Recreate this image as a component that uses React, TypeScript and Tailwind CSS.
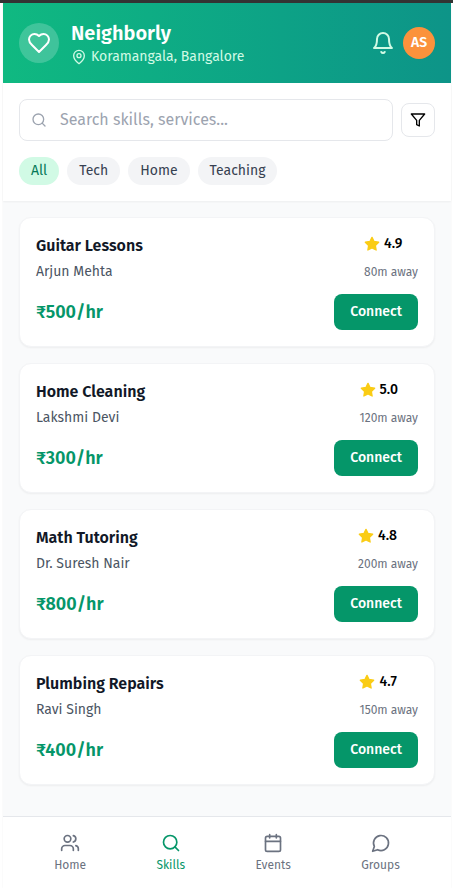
import React from "react";

type IconProps = { className?: string };

function Icon({ className, children }: IconProps & { children: React.ReactNode }) {
  return (
    <svg
      viewBox="0 0 24 24"
      fill="none"
      stroke="currentColor"
      strokeWidth="2"
      strokeLinecap="round"
      strokeLinejoin="round"
      aria-hidden="true"
      className={className}
    >
      {children}
    </svg>
  );
}

const Heart = ({ className }: IconProps) => (
  <Icon className={className}>
    <path d="M19 14c1.49-1.46 3-3.21 3-5.5A5.5 5.5 0 0 0 16.5 3c-1.76 0-3 .5-4.5 2-1.5-1.5-2.74-2-4.5-2A5.5 5.5 0 0 0 2 8.5c0 2.3 1.5 4.05 3 5.5l7 7Z" />
  </Icon>
);

const MapPin = ({ className }: IconProps) => (
  <Icon className={className}>
    <path d="M20 10c0 6-8 12-8 12s-8-6-8-12a8 8 0 0 1 16 0Z" />
    <circle cx="12" cy="10" r="3" />
  </Icon>
);

const Bell = ({ className }: IconProps) => (
  <Icon className={className}>
    <path d="M6 8a6 6 0 0 1 12 0c0 7 3 9 3 9H3s3-2 3-9" />
    <path d="M10.3 21a1.94 1.94 0 0 0 3.4 0" />
  </Icon>
);

const Search = ({ className }: IconProps) => (
  <Icon className={className}>
    <circle cx="11" cy="11" r="8" />
    <path d="m21 21-4.3-4.3" />
  </Icon>
);

const Filter = ({ className }: IconProps) => (
  <Icon className={className}>
    <polygon points="22 3 2 3 10 12.46 10 19 14 21 14 12.46 22 3" />
  </Icon>
);

const Star = ({ className }: IconProps) => (
  <Icon className={className}>
    <polygon
      fill="currentColor"
      points="12 2 15.09 8.26 22 9.27 17 14.14 18.18 21.02 12 17.77 5.82 21.02 7 14.14 2 9.27 8.91 8.26 12 2"
    />
  </Icon>
);

const Users = ({ className }: IconProps) => (
  <Icon className={className}>
    <path d="M16 21v-2a4 4 0 0 0-4-4H6a4 4 0 0 0-4 4v2" />
    <circle cx="9" cy="7" r="4" />
    <path d="M22 21v-2a4 4 0 0 0-3-3.87" />
    <path d="M16 3.13a4 4 0 0 1 0 7.75" />
  </Icon>
);

const Calendar = ({ className }: IconProps) => (
  <Icon className={className}>
    <rect width="18" height="18" x="3" y="4" rx="2" />
    <path d="M16 2v4M8 2v4M3 10h18" />
  </Icon>
);

const MessageCircle = ({ className }: IconProps) => (
  <Icon className={className}>
    <path d="M7.9 20A9 9 0 1 0 4 16.1L2 22Z" />
  </Icon>
);

type Skill = { title: string; name: string; rating: string; distance: string; price: string };

const skills: Skill[] = [
  { title: "Guitar Lessons", name: "Arjun Mehta", rating: "4.9", distance: "80m away", price: "₹500/hr" },
  { title: "Home Cleaning", name: "Lakshmi Devi", rating: "5.0", distance: "120m away", price: "₹300/hr" },
  { title: "Math Tutoring", name: "Dr. Suresh Nair", rating: "4.8", distance: "200m away", price: "₹800/hr" },
  { title: "Plumbing Repairs", name: "Ravi Singh", rating: "4.7", distance: "150m away", price: "₹400/hr" },
];

const categories = ["All", "Tech", "Home", "Teaching"];

const tabs = [
  { label: "Home", icon: Users },
  { label: "Skills", icon: Search },
  { label: "Events", icon: Calendar },
  { label: "Groups", icon: MessageCircle },
];

function Header() {
  return (
    <header className="flex items-center justify-between bg-gradient-to-r from-[#10b981] to-[#0d9488] p-4 text-white">
      <div className="flex items-center gap-3">
        <div className="flex size-10 items-center justify-center rounded-full bg-white/20">
          <Heart className="size-6" />
        </div>
        <div>
          <h1 className="text-xl font-semibold">Neighborly</h1>
          <p className="flex items-center gap-1 text-sm text-[#d1fae5]">
            <MapPin className="size-4" />
            Koramangala, Bangalore
          </p>
        </div>
      </div>
      <div className="flex items-center gap-2">
        <button type="button" aria-label="Notifications" className="text-[#d1fae5]">
          <Bell className="size-6" />
        </button>
        <button type="button" className="size-8 rounded-full bg-[#fb923c] text-sm font-semibold">
          AS
        </button>
      </div>
    </header>
  );
}

function Filters() {
  return (
    <section className="relative bg-white p-4 shadow-xs">
      <div className="flex items-center gap-2">
        <div className="relative flex-1">
          <Search className="absolute left-3 top-1/2 size-4 -translate-y-1/2 text-[#9ca3af]" />
          <input
            type="text"
            aria-label="Search skills and services"
            placeholder="Search skills, services..."
            className="block w-full rounded-lg border border-[#e5e7eb] py-2 pl-10 pr-4 text-base placeholder:text-[#9ca3af]"
          />
        </div>
        <button type="button" aria-label="Filter" className="rounded-lg border border-[#e5e7eb] p-2 text-black">
          <Filter className="size-4" />
        </button>
      </div>
      <div className="mt-4 flex gap-2">
        {categories.map((c, i) => (
          <button
            key={c}
            type="button"
            className={
              i === 0
                ? "rounded-full bg-[#d1fae5] px-3 py-1 text-sm text-[#047857]"
                : "rounded-full bg-[#f3f4f6] px-3 py-1 text-sm text-[#374151]"
            }
          >
            {c}
          </button>
        ))}
      </div>
    </section>
  );
}

function SkillCard({ skill }: { skill: Skill }) {
  return (
    <article className="rounded-xl border border-[#f3f4f6] bg-white p-4 shadow-xs">
      <div className="mb-3 flex justify-between">
        <div>
          <h2 className="text-base font-semibold text-[#111827]">{skill.title}</h2>
          <p className="mt-1 text-sm text-[#4b5563]">{skill.name}</p>
        </div>
        <div className="flex flex-col justify-between">
          <p className="flex items-center gap-1 text-sm font-medium text-black">
            <Star className="size-4 text-[#facc15]" />
            {skill.rating}
          </p>
          <p className="text-xs leading-5 text-[#6b7280]">{skill.distance}</p>
        </div>
      </div>
      <div className="flex items-center justify-between">
        <p className="text-lg font-semibold text-[#059669]">{skill.price}</p>
        <button type="button" className="rounded-lg bg-[#059669] px-4 py-2 text-sm font-medium text-white">
          Connect
        </button>
      </div>
    </article>
  );
}

function BottomNav() {
  return (
    <nav className="flex justify-around border-t border-[#e5e7eb] bg-white px-4 pb-[7px] pt-2">
      {tabs.map(({ label, icon: TabIcon }) => (
        <button
          key={label}
          type="button"
          className={
            label === "Skills"
              ? "flex flex-col items-center gap-1 p-2 text-xs text-[#059669]"
              : "flex flex-col items-center gap-1 p-2 text-xs text-[#6b7280]"
          }
        >
          <TabIcon className="size-5" />
          {label}
        </button>
      ))}
    </nav>
  );
}

export default function App() {
  return (
    <div className="flex min-h-screen flex-col border-t-3 border-[#333333] bg-white pl-[3px] pr-[2px] font-['Fira_Sans','Roboto',sans-serif]">
      <div className="mx-auto flex w-full max-w-md flex-1 flex-col bg-[#f9fafb] shadow-xs">
        <Header />
        <Filters />
        <main className="flex flex-1 flex-col gap-4 p-4">
          {skills.map((s) => (
            <SkillCard key={s.title} skill={s} />
          ))}
        </main>
        <BottomNav />
      </div>
    </div>
  );
}
